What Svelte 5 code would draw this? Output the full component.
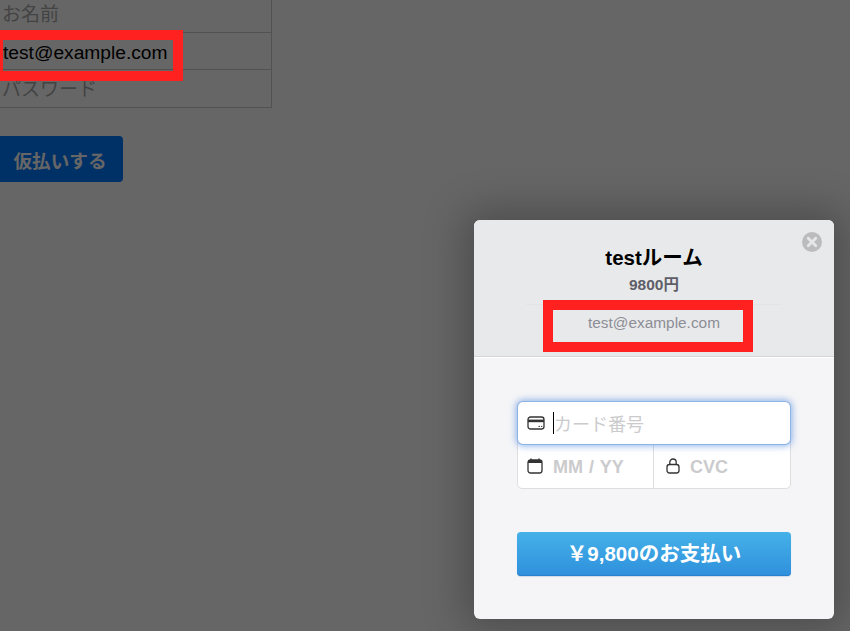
<script>
  const fields = ['お名前', 'test@example.com', 'パスワード']
</script>

<div class="page">
  <form class="form">
    {#each fields as field, i}
      <div class="field" class:filled={i == 1}>{field}</div>
    {/each}
    <button type="button" class="submit">仮払いする</button>
  </form>

  <div class="overlay"></div>
  <div class="mark mark-page"></div>

  <div class="modal">
    <header class="head">
      <svg class="close" width="20" height="20" viewBox="0 0 20 20">
        <circle cx="10" cy="10" r="10" fill="#bcbcbe" />
        <path d="M6.2 6.2l7.6 7.6M13.8 6.2l-7.6 7.6" stroke="#e6e7e9" stroke-width="2.8" stroke-linecap="round" />
      </svg>
      <h1>testルーム</h1>
      <p class="price">9800円</p>
      <p class="email">test@example.com</p>
      <div class="mark mark-modal"></div>
    </header>

    <div class="body">
      <div class="card">
        <div class="row number">
          <svg width="18" height="14" viewBox="0 0 18 14" fill="none">
            <rect x="1" y="1" width="16" height="12" rx="2.5" stroke="#333" stroke-width="1.3" />
            <rect x="1" y="3.6" width="16" height="2.6" fill="#333" />
            <path d="M11.5 10.4h1.5M14 10.4h1.3" stroke="#333" stroke-width="1" />
          </svg>
          <span class="caret"></span>
          <span class="hint kana">カード番号</span>
        </div>
        <div class="row split">
          <div class="cell">
            <svg width="16" height="16" viewBox="0 0 16 16" fill="none">
              <rect x="1" y="2" width="14" height="13" rx="2.5" stroke="#333" stroke-width="1.3" />
              <rect x="1" y="2" width="14" height="3" fill="#333" />
              <path d="M4 .6v2.6M12 .6v2.6" stroke="#333" stroke-width="1.3" />
            </svg>
            <span class="hint bold date">MM / YY</span>
          </div>
          <div class="cell second">
            <svg width="14" height="16" viewBox="0 0 14 16" fill="none">
              <rect x="1" y="6.5" width="12" height="8.5" rx="2.5" stroke="#333" stroke-width="1.3" />
              <path d="M3.8 6.5V4.2a3.2 3.2 0 0 1 6.4 0v2.3" stroke="#333" stroke-width="1.3" />
            </svg>
            <span class="hint bold cvc">CVC</span>
          </div>
        </div>
      </div>
      <button type="button" class="pay">￥9,800のお支払い</button>
    </div>
  </div>
</div>

<style>
  :global(body) {
    margin: 0;
    overflow: hidden;
  }

  .page {
    position: relative;
    width: 850px;
    height: 631px;
    overflow: hidden;
    background: #fff;
    font-family: "Liberation Sans", "Noto Sans CJK JP", sans-serif;
  }

  .form {
    width: 272px;
    margin-top: -5px;
  }

  .field {
    height: 36.5px;
    padding-left: 2px;
    border: 1px solid #ccc;
    border-width: 0 1px 1px 0;
    font-size: 19px;
    line-height: 39px;
    color: #a9a9a9;
  }

  .filled {
    color: #000;
    font-size: 19.2px;
    padding-left: 3px;
    width: 268px;
  }

  .submit {
    display: block;
    width: 123px;
    height: 46px;
    margin-top: 28.5px;
    padding: 0 3px 0 0;
    border: 0;
    border-radius: 0 4px 4px 0;
    background: #007bff;
    color: #fff;
    font: bold 18.6px "Liberation Sans", "Noto Sans CJK JP", sans-serif;
  }

  .overlay {
    position: absolute;
    inset: 0;
    background: rgba(0, 0, 0, 0.6);
  }

  .mark {
    position: absolute;
    box-sizing: border-box;
    border: 10px solid #ff2020;
  }

  .mark-page {
    left: -7px;
    top: 30px;
    width: 190px;
    height: 51px;
  }

  .modal {
    position: absolute;
    left: 474px;
    top: 220px;
    width: 360px;
    height: 399px;
    border-radius: 6px;
    overflow: hidden;
    background: #f5f5f7;
    box-shadow: 0 0 40px 10px rgba(0, 0, 0, 0.25);
  }

  .head {
    position: relative;
    height: 137px;
    box-sizing: border-box;
    padding-top: 25px;
    border-bottom: 1px solid #d4d4d7;
    background: #e8e9eb;
    text-align: center;
  }

  .close {
    position: absolute;
    right: 12px;
    top: 12px;
  }

  h1 {
    margin: 0;
    font-size: 20.5px;
    line-height: 26px;
    font-weight: bold;
    color: #000;
  }

  .price {
    margin: 4px 0 0;
    font-size: 15.5px;
    line-height: 20px;
    font-weight: bold;
    color: #5d5e67;
  }

  .email {
    width: 256px;
    margin: 9px auto 0;
    padding-top: 8px;
    border-top: 1px solid #e3e4e6;
    font-size: 15.4px;
    line-height: 20px;
    color: #8d8e96;
  }

  .mark-modal {
    left: 69px;
    top: 80px;
    width: 210px;
    height: 52px;
  }

  .body {
    padding: 45px 43px 0;
    box-shadow: inset 0 1px 0 #fff;
  }

  .card {
    box-sizing: border-box;
    width: 274px;
    height: 87px;
    border: 1px solid #dedee0;
    border-radius: 5px;
    background: #fff;
  }

  .row {
    display: flex;
    align-items: center;
  }

  .number {
    position: relative;
    height: 42px;
    margin-top: -1px;
    padding-left: 9px;
    border-radius: 5px;
    background: #fff;
    box-shadow: 0 0 0 1px #8cb4e6, 0 0 7px 2px rgba(70, 130, 220, 0.6);
  }

  .caret {
    width: 1px;
    height: 22px;
    margin-left: 8px;
    background: #000;
  }

  .split {
    height: 44px;
  }

  .cell {
    display: flex;
    align-items: center;
    width: 135px;
    height: 100%;
    padding-left: 9px;
    box-sizing: border-box;
  }

  .second {
    width: 137px;
    border-left: 1px solid #dedee0;
    padding-left: 12px;
  }

  .hint {
    color: #cbcbcd;
    font-size: 18px;
  }

  .kana {
    margin-top: -1px;
  }

  .bold {
    font-weight: bold;
    font-size: 18px;
    word-spacing: 1px;
    padding-top: 2px;
  }

  .date {
    margin-left: 10px;
  }

  .cvc {
    margin-left: 10px;
  }

  .pay {
    display: block;
    width: 274px;
    height: 44px;
    margin-top: 43px;
    padding: 0 0 4px;
    border: 0;
    border-radius: 4px;
    background: linear-gradient(#45b1e8, #2f90dc);
    box-shadow: inset 0 -1px 0 #2a80cc, 0 1px 1px rgba(60, 110, 180, 0.2);
    color: #fff;
    font: bold 20.5px "Liberation Sans", "Noto Sans CJK JP", sans-serif;
  }
</style>
